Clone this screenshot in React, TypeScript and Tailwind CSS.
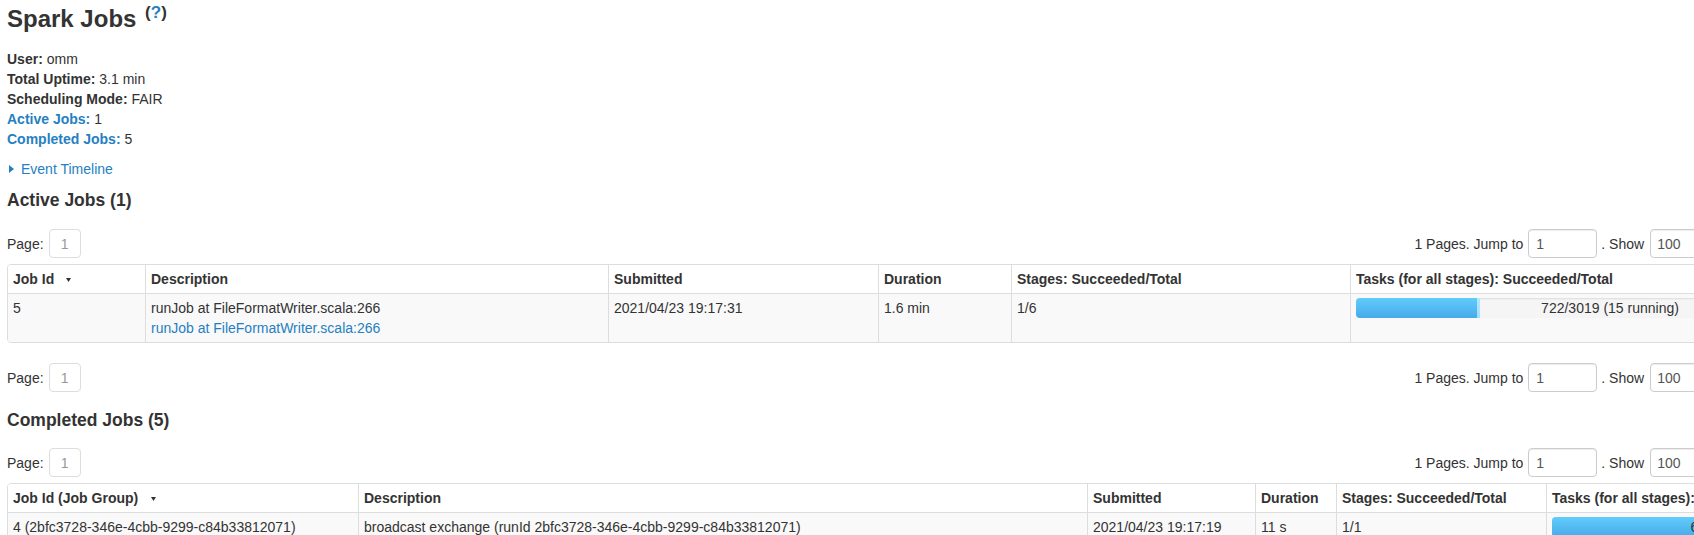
import React from 'react';

const LINK = 'text-[#2580c3]';

function SortArrow({ ml }: { ml: string }) {
  return (
    <svg width="5" height="4" viewBox="0 0 5 4" className={`inline-block align-baseline mb-[2px] ${ml}`}>
      <path d="M0 0H5L2.5 4Z" fill="#333" />
    </svg>
  );
}

function Pagination() {
  return (
    <div className="flex items-center justify-between h-[29px]">
      <div className="flex items-center h-[29px]">
        <span>Page:</span>
        <span className="ml-[5px] w-[32px] h-[29px] border border-[#ddd] rounded-[4px] flex items-center justify-center text-[#999]">
          1
        </span>
      </div>
      <div className="flex items-center h-[29px] mr-[8px]">
        <span>1 Pages. Jump to</span>
        <span className="ml-[5px] w-[69px] h-[29px] border border-[#ccc] rounded-[4px] pl-[7px] flex items-center text-[#555] shadow-[inset_0_1px_1px_rgba(0,0,0,0.075)]">
          1
        </span>
        <span className="ml-[4px]">. Show</span>
        <span className="ml-[6px] w-[69px] h-[29px] border border-[#ccc] rounded-[4px] pl-[6px] flex items-center text-[#555] shadow-[inset_0_1px_1px_rgba(0,0,0,0.075)]">
          100
        </span>
        <span className="ml-[4px]">items in a page.</span>
        <span className="ml-[5px] w-[45px] h-[29px] border border-[#ccc] rounded-[4px] flex items-center justify-center bg-[#f5f5f5]">
          Go
        </span>
      </div>
    </div>
  );
}

function Progress({ done, running, total }: { done: number; running: number; total: number }) {
  const text = running > 0 ? `${done}/${total} (${running} running)` : `${done}/${total}`;
  return (
    <div className="relative h-[20px] rounded-[4px] bg-[#f5f5f5] shadow-[inset_0_1px_2px_rgba(0,0,0,0.1)] overflow-hidden flex">
      <div
        className="h-full bg-[linear-gradient(to_bottom,#62ccfb,#46aae9)]"
        style={{ width: `${(done / total) * 100}%` }}
      />
      <div
        className="h-full bg-[linear-gradient(to_bottom,#b4e9ff,#a0dfff)]"
        style={{ width: `${(running / total) * 100}%` }}
      />
      <span className="absolute inset-0 text-center leading-[20px]">{text}</span>
    </div>
  );
}

const th = 'text-left align-top font-bold px-[5px] py-[4px] leading-[20px]';
const td = 'text-left align-top px-[5px] py-[4px] leading-[20px] border-t border-[#ddd]';

function ActiveTable() {
  return (
    <div className="w-[1863px] border border-[#ddd] rounded-[4px] overflow-hidden">
      <table className="table-fixed w-[1861px] border-separate border-spacing-0">
        <colgroup>
          <col className="w-[137px]" />
          <col className="w-[463px]" />
          <col className="w-[270px]" />
          <col className="w-[133px]" />
          <col className="w-[339px]" />
          <col className="w-[519px]" />
        </colgroup>
        <thead>
          <tr className="bg-white">
            <th className={th}>
              Job Id
              <SortArrow ml="ml-[12px]" />
            </th>
            <th className={`${th} border-l border-[#ddd]`}>Description</th>
            <th className={`${th} border-l border-[#ddd]`}>Submitted</th>
            <th className={`${th} border-l border-[#ddd]`}>Duration</th>
            <th className={`${th} border-l border-[#ddd]`}>Stages: Succeeded/Total</th>
            <th className={`${th} border-l border-[#ddd]`}>Tasks (for all stages): Succeeded/Total</th>
          </tr>
        </thead>
        <tbody>
          <tr className="bg-[#f9f9f9]">
            <td className={td}>5</td>
            <td className={`${td} border-l`}>
              <div>runJob at FileFormatWriter.scala:266</div>
              <div className={LINK}>runJob at FileFormatWriter.scala:266</div>
            </td>
            <td className={`${td} border-l`}>2021/04/23 19:17:31</td>
            <td className={`${td} border-l`}>1.6 min</td>
            <td className={`${td} border-l`}>1/6</td>
            <td className={`${td} border-l`}>
              <Progress done={722} running={15} total={3019} />
            </td>
          </tr>
        </tbody>
      </table>
    </div>
  );
}

const completed = [
  {
    id: '4 (2bfc3728-346e-4cbb-9299-c84b33812071)',
    desc: 'broadcast exchange (runId 2bfc3728-346e-4cbb-9299-c84b33812071)',
    link: '$anonfun$relationFuture$1 at BroadcastExchangeExec.scala:99',
    submitted: '2021/04/23 19:17:19',
    duration: '11 s',
    stages: '1/1',
    done: 64,
    total: 64,
  },
  {
    id: '3 (2bfc3728-346e-4cbb-9299-c84b33812071)',
    desc: 'broadcast exchange (runId 2bfc3728-346e-4cbb-9299-c84b33812071)',
    link: '$anonfun$relationFuture$1 at BroadcastExchangeExec.scala:99',
    submitted: '2021/04/23 19:17:05',
    duration: '13 s',
    stages: '1/1',
    done: 64,
    total: 64,
  },
  {
    id: '2',
    desc: 'runJob at FileFormatWriter.scala:266',
    link: 'runJob at FileFormatWriter.scala:266',
    submitted: '2021/04/23 19:16:50',
    duration: '14 s',
    stages: '2/2',
    done: 120,
    total: 120,
  },
];

function CompletedTable() {
  return (
    <div className="w-[1863px] border border-[#ddd] rounded-[4px] overflow-hidden">
      <table className="table-fixed w-[1861px] border-separate border-spacing-0">
        <colgroup>
          <col className="w-[350px]" />
          <col className="w-[729px]" />
          <col className="w-[168px]" />
          <col className="w-[81px]" />
          <col className="w-[210px]" />
          <col className="w-[323px]" />
        </colgroup>
        <thead>
          <tr className="bg-white">
            <th className={th}>
              Job Id (Job Group)
              <SortArrow ml="ml-[13px]" />
            </th>
            <th className={`${th} border-l border-[#ddd]`}>Description</th>
            <th className={`${th} border-l border-[#ddd]`}>Submitted</th>
            <th className={`${th} border-l border-[#ddd]`}>Duration</th>
            <th className={`${th} border-l border-[#ddd]`}>Stages: Succeeded/Total</th>
            <th className={`${th} border-l border-[#ddd]`}>Tasks (for all stages): Succeeded/Total</th>
          </tr>
        </thead>
        <tbody>
          {completed.map((r, i) => (
            <tr key={i} className={i % 2 === 0 ? 'bg-[#f9f9f9]' : 'bg-white'}>
              <td className={td}>{r.id}</td>
              <td className={`${td} border-l`}>
                <div>{r.desc}</div>
                <div className={LINK}>{r.link}</div>
              </td>
              <td className={`${td} border-l`}>{r.submitted}</td>
              <td className={`${td} border-l`}>{r.duration}</td>
              <td className={`${td} border-l`}>{r.stages}</td>
              <td className={`${td} border-l`}>
                <Progress done={r.done} running={0} total={r.total} />
              </td>
            </tr>
          ))}
        </tbody>
      </table>
    </div>
  );
}

export default function App() {
  return (
    <div className="w-screen h-screen overflow-hidden bg-white">
      <div className="w-[1880px] pl-[7px] text-[14px] leading-[20px] text-[#333] font-['Liberation_Sans',Arial,Helvetica,sans-serif]">
        <h3 className="m-0 text-[24px] leading-[38px] h-[38px] font-bold text-[#333]">
          Spark Jobs{' '}
          <span className="relative top-[-9px] ml-[2px] text-[17px] leading-none">
            (<span className={LINK}>?</span>)
          </span>
        </h3>
        <ul className="mt-[11px] list-none p-0">
          <li>
            <strong>User:</strong> omm
          </li>
          <li>
            <strong>Total Uptime:</strong> 3.1 min
          </li>
          <li>
            <strong>Scheduling Mode:</strong> FAIR
          </li>
          <li>
            <strong className={LINK}>Active Jobs:</strong> 1
          </li>
          <li>
            <strong className={LINK}>Completed Jobs:</strong> 5
          </li>
        </ul>
        <div className="mt-[10px] flex items-center h-[20px]">
          <span className="ml-[2px] w-0 h-0 border-y-[4.5px] border-y-transparent border-l-[5px] border-l-[#2580c3]" />
          <span className={`ml-[7px] ${LINK}`}>Event Timeline</span>
        </div>
        <h4 className="mt-[11px] text-[17.5px] leading-[20px] h-[20px] font-bold">Active Jobs (1)</h4>
        <div className="mt-[19px]">
          <Pagination />
        </div>
        <div className="mt-[6px]">
          <ActiveTable />
        </div>
        <div className="mt-[20px]">
          <Pagination />
        </div>
        <h4 className="mt-[18px] text-[17.5px] leading-[20px] h-[20px] font-bold">Completed Jobs (5)</h4>
        <div className="mt-[18px]">
          <Pagination />
        </div>
        <div className="mt-[6px]">
          <CompletedTable />
        </div>
      </div>
    </div>
  );
}
